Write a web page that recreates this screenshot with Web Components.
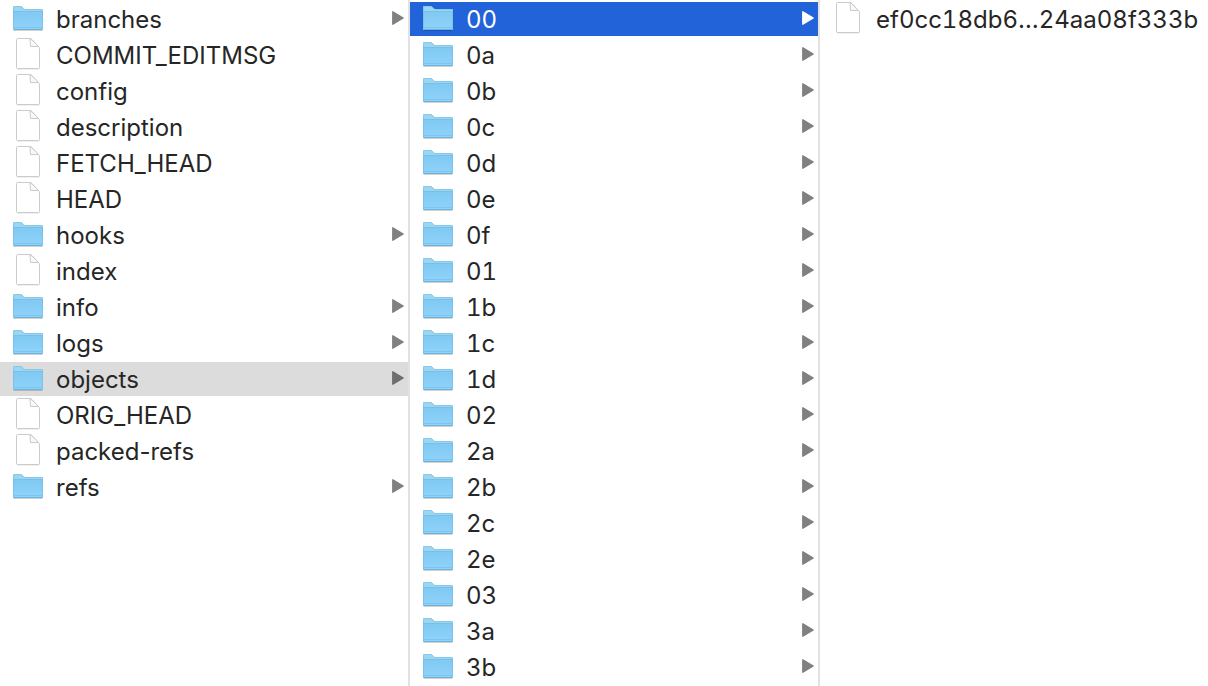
<!DOCTYPE html>
<html lang="en">
<head>
<meta charset="utf-8">
<title>Column browser</title>
<style>
  html, body { margin: 0; height: 100%; background: #fff; }
  body { overflow: hidden; }
</style>
</head>
<body>
<column-browser></column-browser>

<template id="browser-template">
  <style>
    :host {
      display: grid;
      grid-template-columns: 410fr 410fr 388fr;
      height: 100vh;
      overflow: hidden;
      background: #fff;
      color: #262626;
      font: 24px/34px Inter, "Liberation Sans", sans-serif;
    }
    browser-column:not(:last-child) { border-right: 2px solid #e2e2e2; }
    browser-column:not(:first-of-type) { font-variant-numeric: tabular-nums; }
  </style>
</template>

<template id="column-template">
  <style>
    :host {
      display: flex;
      flex-direction: column;
      gap: 2px;
      box-sizing: border-box;
      min-width: 0;
      padding-top: 2px;
      overflow: hidden;
    }
  </style>
  <slot></slot>
</template>

<template id="item-template">
  <style>
    :host { display: block; flex: none; --arrow: #808080; }
    :host([state="open"]) { background: #dcdcdc; --arrow: #6e6e6e; }
    :host([state="selected"]) { background: #2263d9; color: #fff; --arrow: #fff; }
    button {
      display: flex;
      align-items: center;
      gap: 12px;
      width: 100%;
      height: 34px;
      margin: 0;
      padding: 0 4px 0 12px;
      border: 0;
      background: none;
      color: inherit;
      font: inherit;
      font-variant-numeric: inherit;
      text-align: left;
    }
    .name { flex: 1; min-width: 0; padding-top: 2px; white-space: nowrap; }
    svg { display: block; flex: none; }
    .arrow { fill: var(--arrow); stroke: var(--arrow); }
    .folder, :host([kind="folder"]) .file { display: none; }
    :host([kind="folder"]) .folder { display: block; }
    :host(:not([kind="folder"])) .arrow { display: none; }
  </style>
  <button type="button">
    <svg class="folder" width="32" height="34" viewBox="0 0 32 34" aria-hidden="true">
      <defs>
        <linearGradient id="front" x1="0" y1="0" x2="0" y2="1">
          <stop offset="0" stop-color="#80c9f3"/><stop offset="1" stop-color="#90d3f9"/>
        </linearGradient>
      </defs>
      <path d="M1.500 28.500H30.500" stroke="#000" stroke-opacity=".18" stroke-width="1"/>
      <path d="M1 27.300V5Q1 4 2 4H8.500Q9.500 4 10.200 4.700L12 6.400Q12.600 7 13.500 7H30Q31 7 31 8V27.300Q31 28 30 28H2Q1 28 1 27.300Z" fill="#9ad5f2"/>
      <path d="M1.500 27V5.500Q1.500 4.500 2.500 4.500H8.500Q9.300 4.500 9.900 5.100L11.700 6.800Q12.400 7.500 13.500 7.500H29.500Q30.500 7.500 30.500 8.500V27" fill="none" stroke="#7fc2e6" stroke-width="1" stroke-opacity=".7"/>
      <path d="M1 10H31V27.300Q31 28 30 28H2Q1 28 1 27.300Z" fill="url(#front)"/>
      <path d="M2 9.500H30" stroke="#7abfe6" stroke-width="1"/>
      <path d="M2 25.500H30" stroke="#72bde8" stroke-opacity=".6" stroke-width="1"/>
      <path d="M1.500 27.500H30.500" stroke="#6bb3de" stroke-width="1"/>
      <path d="M1.500 9V27M30.500 9V27" stroke="#6fbbe6" stroke-width="1" stroke-opacity=".6"/>
    </svg>
    <svg class="file" width="32" height="34" viewBox="0 0 32 34" aria-hidden="true">
      <path d="M5 31H27.500" stroke="#000" stroke-opacity=".12" stroke-width="1"/>
      <path d="M5.500 .5H18Q19 .5 20 1.500L26.500 8.500Q27.500 9.500 27.500 11V29.500Q27.500 30.500 26.500 30.500H5.500Q4.500 30.500 4.500 29.500V1.500Q4.500 .5 5.500 .5Z" fill="#fff" stroke="#cbcbcb" stroke-width="1"/>
      <path d="M18 1L18.500 8.500H26.500L19 1Z" fill="#f8f8f8" stroke="#cbcbcb" stroke-width="1" stroke-linejoin="round"/>
    </svg>
    <span class="name"><slot></slot></span>
    <svg class="arrow" width="12" height="34" viewBox="0 0 12 34" aria-hidden="true">
      <path d="M.8 9.800V22.200L11.200 16Z" stroke-width="1.400" stroke-linejoin="round"/>
    </svg>
  </button>
</template>

<script>
  const stamp = (host, id) => {
    const root = host.attachShadow({ mode: "open" });
    root.append(document.getElementById(id).content.cloneNode(true));
    return root;
  };

  class BrowserItem extends HTMLElement {
    constructor() { super(); stamp(this, "item-template"); }
  }
  class BrowserColumn extends HTMLElement {
    constructor() { super(); stamp(this, "column-template"); }
    set entries(list) {
      this.replaceChildren(...list.map(([name, kind, state]) => {
        const item = document.createElement("browser-item");
        item.setAttribute("kind", kind);
        if (state) item.setAttribute("state", state);
        item.textContent = name;
        return item;
      }));
    }
  }
  customElements.define("browser-item", BrowserItem);
  customElements.define("browser-column", BrowserColumn);

  const folders = names => names.map(name => [name, "folder"]);
  const columns = [
    [
      ["branches", "folder"], ["COMMIT_EDITMSG", "file"], ["config", "file"],
      ["description", "file"], ["FETCH_HEAD", "file"], ["HEAD", "file"],
      ["hooks", "folder"], ["index", "file"], ["info", "folder"],
      ["logs", "folder"], ["objects", "folder", "open"], ["ORIG_HEAD", "file"],
      ["packed-refs", "file"], ["refs", "folder"]
    ],
    [
      ["00", "folder", "selected"],
      ...folders(["0a", "0b", "0c", "0d", "0e", "0f", "01", "1b", "1c", "1d",
                  "02", "2a", "2b", "2c", "2e", "03", "3a", "3b"])
    ],
    [["ef0cc18db6…24aa08f333b", "file"]]
  ];

  customElements.define("column-browser", class extends HTMLElement {
    constructor() {
      super();
      const root = stamp(this, "browser-template");
      for (const entries of columns) {
        const column = document.createElement("browser-column");
        column.entries = entries;
        root.append(column);
      }
    }
  });
</script>
</body>
</html>
